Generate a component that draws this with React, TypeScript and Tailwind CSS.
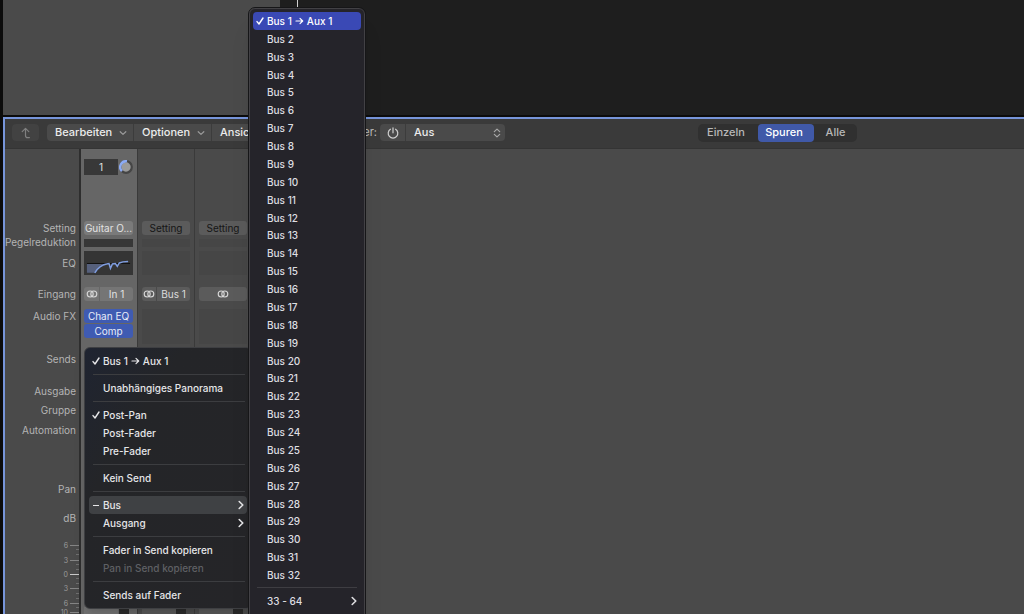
import type { ReactNode } from "react";

const LABELS = [
  { text: "Setting", gap: "mt-0" },
  { text: "Pegelreduktion", gap: "mt-0" },
  { text: "EQ", gap: "mt-[7px]" },
  { text: "Eingang", gap: "mt-[17px]" },
  { text: "Audio FX", gap: "mt-2" },
  { text: "Sends", gap: "mt-[29px]" },
  { text: "Ausgabe", gap: "mt-[18px]" },
  { text: "Gruppe", gap: "mt-[5px]" },
  { text: "Automation", gap: "mt-1.5" },
  { text: "Pan", gap: "mt-[45px]" },
  { text: "dB", gap: "mt-[15px]" },
];

const SCALE = [
  { text: "6", y: 20 },
  { text: "3", y: 35 },
  { text: "0", y: 49 },
  { text: "3", y: 63 },
  { text: "6", y: 78 },
  { text: "10", y: 87 },
];

const BUSES = Array.from({ length: 31 }, (_, i) => `Bus ${i + 2}`);

function Check() {
  return (
    <svg viewBox="0 0 8 8" className="h-2 w-2" fill="none" stroke="currentColor" strokeWidth="1.4" strokeLinecap="round" strokeLinejoin="round">
      <path d="M1 4.6 3 7 7 1" />
    </svg>
  );
}

function ChevronDown() {
  return (
    <svg viewBox="0 0 8 6" className="h-1.5 w-2 text-[#9a9a9a]" fill="none" stroke="currentColor" strokeWidth="1.2" strokeLinecap="round" strokeLinejoin="round">
      <path d="M1.2 1.7 4 4.4 6.8 1.7" />
    </svg>
  );
}

function ChevronRight() {
  return (
    <svg viewBox="0 0 6 10" className="h-2.5 w-1.5" fill="none" stroke="currentColor" strokeWidth="1.6" strokeLinecap="round" strokeLinejoin="round">
      <path d="M1.2 1.5 4.8 5 1.2 8.5" />
    </svg>
  );
}

function Stereo() {
  return (
    <svg viewBox="0 0 12 8" className="h-2 w-3 text-[#d8d8d8]" fill="none" stroke="currentColor" strokeWidth="1.1">
      <circle cx="4.2" cy="4" r="3" />
      <circle cx="7.8" cy="4" r="3" />
    </svg>
  );
}

function Arrow() {
  return (
    <svg viewBox="0 0 9 8" className="mx-[3px] h-2 w-[9px]" fill="none" stroke="currentColor" strokeWidth="1.2" strokeLinecap="round" strokeLinejoin="round">
      <path d="M1 4h6.6M5 1.4 7.7 4 5 6.6" />
    </svg>
  );
}

function MenuRow({ mark, children, sub, active, disabled }: { mark?: ReactNode; children: ReactNode; sub?: boolean; active?: boolean; disabled?: boolean }) {
  return (
    <button
      type="button"
      role="menuitem"
      disabled={disabled}
      className={`flex h-[18px] w-full items-center rounded-[4px] pr-[3px] text-left ${active ? "bg-[#3f4144]" : ""} ${disabled ? "text-[#5f6064]" : "text-[#e6e6e8]"}`}
    >
      <span className="flex w-[14px] justify-center">{mark}</span>
      <span className="flex flex-1 items-center whitespace-nowrap">{children}</span>
      {sub && <ChevronRight />}
    </button>
  );
}

function Separator() {
  return <div role="separator" className="my-1 mr-0.5 ml-1 h-px bg-[#3c3d40]" />;
}

function SendMenu() {
  return (
    <div role="menu" className="absolute top-[347px] left-[84px] w-[168px] rounded-[6px] border border-[#3e3f42] bg-linear-to-br from-[#1f2431] via-[#242528] via-30% to-[#252528] p-1 text-[10px] font-medium shadow-lg">
      <MenuRow mark={<Check />}>Bus 1<Arrow />Aux 1</MenuRow>
      <Separator />
      <MenuRow>Unabhängiges Panorama</MenuRow>
      <Separator />
      <MenuRow mark={<Check />}>Post-Pan</MenuRow>
      <MenuRow>Post-Fader</MenuRow>
      <MenuRow>Pre-Fader</MenuRow>
      <Separator />
      <MenuRow>Kein Send</MenuRow>
      <Separator />
      <MenuRow active sub mark={<span className="h-px w-1.5 bg-current" />}>Bus</MenuRow>
      <MenuRow sub>Ausgang</MenuRow>
      <Separator />
      <MenuRow>Fader in Send kopieren</MenuRow>
      <MenuRow disabled>Pan in Send kopieren</MenuRow>
      <Separator />
      <MenuRow>Sends auf Fader</MenuRow>
    </div>
  );
}

function BusMenu() {
  return (
    <div role="menu" className="absolute top-2 -bottom-3 left-[249px] w-[116px] rounded-[6px] border border-[#424145] bg-[#25242a] px-[3px] pt-[3px] pb-1 text-[10px] font-medium text-[#dedee1] shadow-xl outline outline-[#161618]">
      <div className="grid h-[572px] auto-rows-fr">
        <button type="button" role="menuitem" className="flex items-center rounded-[4px] bg-[#3a49b5] leading-none text-white">
          <span className="flex w-[14px] justify-center"><Check /></span>
          Bus 1<Arrow />Aux 1
        </button>
        {BUSES.map((bus) => (
          <button key={bus} type="button" role="menuitem" className="flex items-center pl-[14px] leading-none">
            {bus}
          </button>
        ))}
      </div>
      <div role="separator" className="mx-1 mt-[3px] mb-1 h-px bg-[#3e3d42]" />
      <button type="button" role="menuitem" className="flex h-[18px] w-full items-center justify-between pr-1 pl-[14px]">
        33 - 64
        <ChevronRight />
      </button>
    </div>
  );
}

function Toolbar() {
  return (
    <header className="flex h-[30px] shrink-0 items-center border-b border-[#343434] bg-[#3a3a3a] pb-0.5 text-[11px] font-medium text-[#ececec]">
      <button type="button" aria-label="Zurück" className="ml-[7px] flex h-[17px] w-[27px] items-center justify-center rounded-[4px] bg-[#424242] text-[#808080]">
        <svg viewBox="0 0 12 12" className="h-3 w-3" fill="none" stroke="currentColor" strokeWidth="1.2" strokeLinecap="round" strokeLinejoin="round">
          <path d="M2.2 4.6 5.5 1.4 8.8 4.6M5.5 1.6V8.4Q5.5 10.6 7.6 10.6H9.4" />
        </svg>
      </button>
      <div className="ml-2 flex h-[17px] w-[333px] shrink-0 rounded-[4px] bg-[#4a4a4a]">
        <button type="button" className="flex w-[87px] items-center justify-between border-r border-[#3c3c3c] pr-1.5 pl-2">Bearbeiten<ChevronDown /></button>
        <button type="button" className="flex w-[78px] items-center justify-between border-r border-[#3c3c3c] pr-1.5 pl-2">Optionen<ChevronDown /></button>
        <button type="button" className="flex w-[70px] items-center justify-between pr-1.5 pl-2">Ansicht<ChevronDown /></button>
        <span className="flex flex-1 items-center justify-end bg-[#3a3a3a] pr-[3px] font-normal text-[#bdbdbd]">Fader:</span>
      </div>
      <div className="flex h-[17px] shrink-0 rounded-[4px] bg-[#4a4a4a]">
        <button type="button" aria-label="Fader" className="flex w-[26px] items-center justify-center border-r border-[#3c3c3c] text-[#d0d0d0]">
          <svg viewBox="0 0 12 12" className="h-3 w-3" fill="none" stroke="currentColor" strokeWidth="1.2" strokeLinecap="round">
            <path d="M6 .8v5M3.4 2.2a4.8 4.8 0 1 0 5.2 0" />
          </svg>
        </button>
        <div className="relative w-[99px]">
          <select aria-label="Send" className="h-[17px] w-full appearance-none bg-transparent pl-2 outline-none">
            <option>Aus</option>
          </select>
          <svg viewBox="0 0 8 10" className="pointer-events-none absolute top-1 right-1 h-2.5 w-2 text-[#a8a8a8]" fill="none" stroke="currentColor" strokeWidth="1.2" strokeLinecap="round" strokeLinejoin="round">
            <path d="M1.3 3.6 4 1.1 6.7 3.6M1.3 6.4 4 8.9 6.7 6.4" />
          </svg>
        </div>
      </div>
      <div className="mr-[167px] ml-auto flex h-[18px] rounded-[5px] bg-[#303030] text-[#b8b8b8]">
        <button type="button" className="w-[60px] pr-1">Einzeln</button>
        <button type="button" className="w-14 rounded-[4px] bg-[#4059a8] pr-1 text-white">Spuren</button>
        <button type="button" className="w-[43px]">Alle</button>
      </div>
    </header>
  );
}

function LabelColumn() {
  return (
    <div className="flex w-[74px] shrink-0 flex-col pt-[72px] text-[10px] leading-[14px] text-[#b4b4b4]">
      {LABELS.map((l) => (
        <div key={l.text} className={`${l.gap} flex h-[14px] shrink-0 justify-end pr-[3px] whitespace-nowrap`}>{l.text}</div>
      ))}
      <svg viewBox="0 0 74 90" className="h-[90px] w-[74px] shrink-0">
        {SCALE.map((s) => (
          <g key={s.y}>
            <text x="63" y={s.y + 3} textAnchor="end" fontSize="7" fill="#9a9a9a">{s.text}</text>
            <path d={`M65 ${s.y + 0.5}h9`} stroke={s.text === "0" ? "#c8c8c8" : "#848484"} />
          </g>
        ))}
        <path d="M71 24.5h3M71 29.5h3M71 39.5h3M71 44.5h3M71 53.5h3M71 58.5h3M71 68.5h3M71 73.5h3M71 82.5h3" stroke="#6e6e6e" />
      </svg>
    </div>
  );
}

function FaderFoot({ light }: { light?: boolean }) {
  return (
    <div className="mt-auto flex h-[7px] justify-between">
      <div className={`w-[34px] ${light ? "bg-[#717171]" : "bg-[#575757]"}`} />
      <div className="mr-1 w-2.5 bg-[#2a2a2a]" />
    </div>
  );
}

function ActiveStrip() {
  return (
    <section className="flex h-full w-14 shrink-0 flex-col bg-[#666666] pt-2.5 pr-1 pl-[3px] text-[10px] text-[#e2e2e2]">
      <div className="flex h-4 items-center gap-px">
        <div className="flex h-4 w-[34px] items-center justify-center bg-[#383838]">1</div>
        <svg viewBox="0 0 14 14" className="h-3.5 w-3.5 shrink-0">
          <circle cx="7" cy="7" r="5.8" fill="#9b9b9b" stroke="#454545" strokeWidth="2.2" />
          <path d="M2.9 11.1A5.8 5.8 0 0 1 8 1.3" fill="none" stroke="#8cabf5" strokeWidth="2.4" />
        </svg>
      </div>
      <button type="button" className="mt-[46px] h-[14px] rounded-[3px] bg-[#7a7a7a] leading-[14px]">Guitar O...</button>
      <div className="mt-1 h-2 bg-[#373737]" />
      <div className="mt-1 h-6 bg-[#353535]">
        <svg viewBox="0 0 50 24" className="h-6 w-full">
          <path d="M3 12.5h44" stroke="#111" />
          <path d="M3 13h16q-5 3-7 9H3z" fill="#56607c" />
          <path d="M11 22C14 17 17 14 23 13l2.500-.5 1.500 5 2-4.500 3-.5 2 3 2-3.500q3-1.500 9-1.500" fill="none" stroke="#7f9de0" strokeWidth="1.5" />
        </svg>
      </div>
      <div className="mt-3 flex h-[14px] rounded-[3px] bg-[#757575]">
        <button type="button" aria-label="Stereo" className="flex w-4 items-center justify-center border-r border-[#666666]"><Stereo /></button>
        <button type="button" className="flex-1 leading-[14px]">In 1</button>
      </div>
      <button type="button" className="mt-2 h-[14px] rounded-[3px] bg-[#3f5bb2] leading-[14px] text-[#e8ecf8]">Chan EQ</button>
      <button type="button" className="mt-px h-[14px] rounded-[3px] bg-[#3f5bb2] leading-[14px] text-[#e8ecf8]">Comp</button>
      <FaderFoot light />
    </section>
  );
}

function Strip({ input }: { input?: string }) {
  return (
    <section className="flex h-full w-[57px] shrink-0 flex-col border-l border-[#3a3a3a] bg-[#4a4a4a] px-1 pt-[72px] text-[10px] text-[#dcdcdc]">
      <button type="button" className="h-[14px] rounded-[3px] bg-[#5b5b5b] leading-[14px] text-[#161616]">Setting</button>
      <div className="mt-1 h-2 bg-[#464646]" />
      <div className="mt-1 h-6 bg-[#464646]" />
      <div className="mt-3 flex h-[14px] rounded-[3px] bg-[#5b5b5b]">
        <button type="button" aria-label="Stereo" className={`flex items-center justify-center ${input ? "w-[15px] border-r border-[#4a4a4a]" : "flex-1"}`}><Stereo /></button>
        {input && <button type="button" className="flex-1 leading-[14px]">{input}</button>}
      </div>
      <div className="mt-2 h-[35px] bg-[#464646]" />
      <FaderFoot />
    </section>
  );
}

export default function App() {
  return (
    <div className="relative flex h-screen flex-col overflow-hidden bg-[#0c0c0c] font-['Inter','Liberation_Sans',sans-serif] text-[#dddddd]">
      <div className="flex h-[115px] shrink-0 border-l-3 border-[#0c0c0c]">
        <div className="w-[277px] bg-[#4a4a4a]" />
        <div className="flex-1 bg-[#1e1e1e] pl-[17px]">
          <div className="h-2 w-px bg-[#d0d0d0]" />
        </div>
      </div>
      <main className="mt-0.5 ml-[3px] flex min-h-0 flex-1 flex-col border-t-2 border-l-2 border-[#7795da] bg-[#4a4a4a]">
        <Toolbar />
        <div className="flex min-h-0 flex-1">
          <LabelColumn />
          <div className="flex min-h-0 border-l-2 border-[#2e2e2e]">
            <ActiveStrip />
            <Strip input="Bus 1" />
            <Strip />
          </div>
        </div>
      </main>
      <SendMenu />
      <BusMenu />
    </div>
  );
}
